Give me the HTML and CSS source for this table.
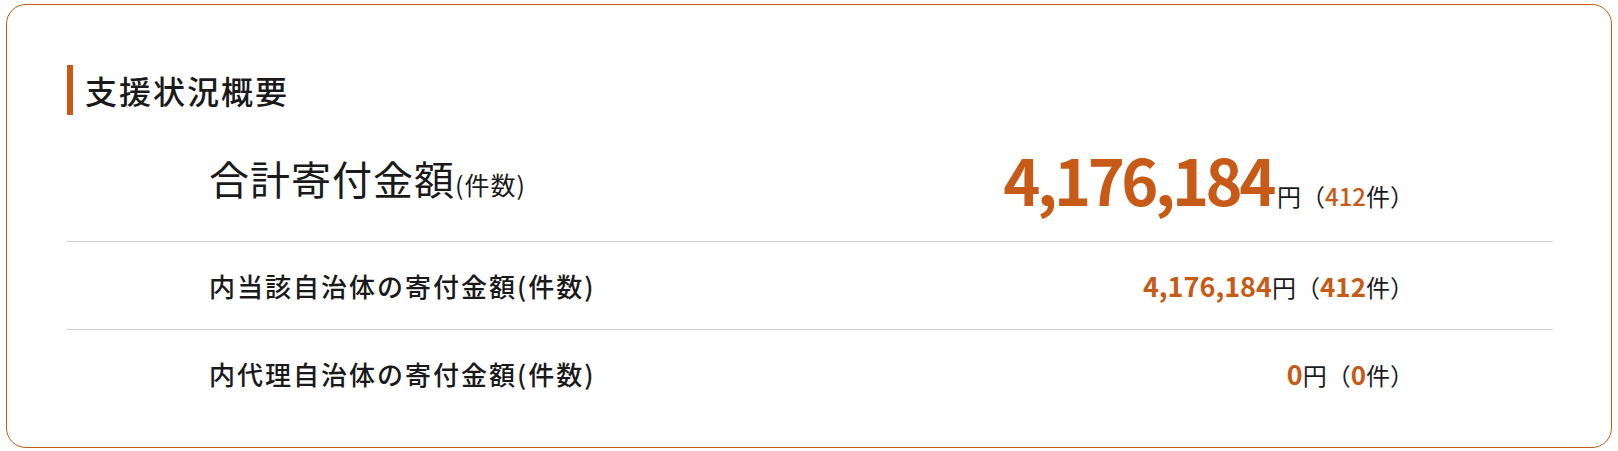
FILE: index.html
```html
<!DOCTYPE html>
<html lang="ja">
<head>
<meta charset="utf-8">
<title>支援状況概要</title>
<link rel="stylesheet" href="styles.css">
</head>
<body>
<section class="card">
  <h2 class="card-title">支援状況概要</h2>
  <div class="row row-total">
    <div class="label">合計寄付金額<span class="label-sub">(件数)</span></div>
    <div class="value"><span class="num">4,176,184</span>円（<span class="cnt">412</span>件）</div>
  </div>
  <div class="row row-sub">
    <div class="label">内当該自治体の寄付金額(件数)</div>
    <div class="value"><span class="num">4,176,184</span>円（<span class="cnt">412</span>件）</div>
  </div>
  <div class="row row-sub">
    <div class="label">内代理自治体の寄付金額(件数)</div>
    <div class="value"><span class="num">0</span>円（<span class="cnt">0</span>件）</div>
  </div>
</section>
</body>
</html>
```
FILE: styles.css
```css
html, body {
  margin: 0;
  padding: 0;
  background: #ffffff;
}
body {
  font-family: "Noto Sans CJK JP", "Noto Sans", sans-serif;
  color: #1a1a1a;
}
.card {
  margin: 4px 6px 0 6px;
  width: 1606px;
  box-sizing: border-box;
  height: 444px;
  border: 1px solid #c65a16;
  border-radius: 20px;
  padding: 60px 58px 30px 60px;
}
.card-title {
  margin: 0;
  height: 50px;
  box-sizing: border-box;
  border-left: 6px solid #c65a16;
  padding-left: 12px;
  display: flex;
  align-items: center;
  font-size: 32px;
  font-weight: 500;
  letter-spacing: 2px;
  line-height: 1;
}
.row {
  display: flex;
  align-items: center;
  justify-content: space-between;
  padding: 0 139px 0 142px;
  border-bottom: 1px solid #cccccc;
}
.row:last-child {
  border-bottom: none;
}
.row-total {
  height: 126px;
}
.row-sub {
  height: 87px;
}
.row-total .label {
  font-size: 40px;
  font-weight: 400;
  letter-spacing: 1px;
  line-height: 1;
}
.label-sub {
  font-size: 25px;
  letter-spacing: 1px;
}
.row-sub .label {
  font-size: 26px;
  font-weight: 500;
  letter-spacing: 2px;
  line-height: 1;
}
.value {
  font-size: 24px;
  line-height: 1;
  white-space: nowrap;
}
.num, .cnt {
  color: #c65a16;
  font-weight: 700;
}
.row-sub .num {
  font-size: 27px;
}
.row-sub .cnt {
  font-size: 26px;
}
.row-total .num {
  font-size: 63px;
  letter-spacing: -3.5px;
  margin-right: 4px;
}
.row-total .cnt {
  font-weight: 500;
}
```
